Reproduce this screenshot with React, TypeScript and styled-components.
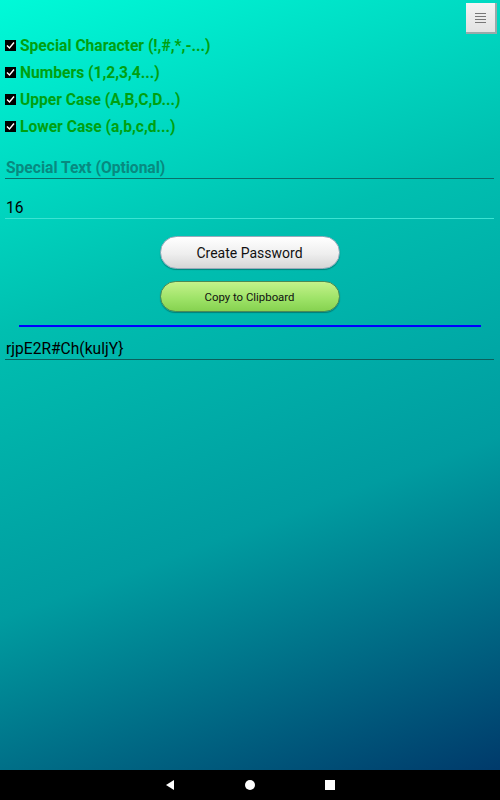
import styled, { createGlobalStyle } from 'styled-components'
import * as React from 'react'

const Global = createGlobalStyle`
  html, body {
    margin: 0;
    padding: 0;
    width: 500px;
    height: 800px;
    overflow: hidden;
  }
  body {
    font-family: Roboto, "Noto Sans", sans-serif;
  }
`;

const Screen = styled.div`
  width: 500px;
  height: 800px;
  display: flex;
  flex-direction: column;
`;

// gradient panel holding the whole form
const Content = styled.div`
  flex: 1;
  position: relative;
  background: linear-gradient(160deg, #00fad8 0%, #00bfb0 35%, #009ca0 65%, #003a6b 100%);
  padding: 32px 6px 0 5px;
  display: flex;
  flex-direction: column;
`;

const MenuButton = styled.div`
  position: absolute;
  top: 3px;
  right: 3px;
  width: 31px;
  height: 31px;
  box-sizing: border-box;
  background: linear-gradient(180deg, #f4f4f4, #e2e2e2);
  border-right: 2px solid #9aa;
  border-bottom: 2px solid #9aa;
  display: flex;
  flex-direction: column;
  justify-content: center;
  align-items: center;
  gap: 2px;
`;

const MenuLine = styled.span`
  width: 11px;
  height: 1px;
  background: #777;
`;

const OptionRow = styled.label`
  display: flex;
  align-items: center;
  height: 27px;
  gap: 4px;
`;

const Box = styled.span`
  width: 11px;
  height: 11px;
  background: #000;
  display: flex;
  align-items: center;
  justify-content: center;
`;

const OptionText = styled.span`
  color: #00a010;
  font-weight: bold;
  font-size: 15.6px;
`;

const Field = styled.div<{line: string; height: number}>`
  height: ${p => p.height}px;
  border-bottom: 1px solid ${p => p.line};
  display: flex;
  align-items: flex-end;
  padding: 0 0 1px 1px;
  box-sizing: border-box;
`;

const Label = styled.span`
  color: #078a80;
  font-weight: bold;
  font-size: 15.6px;
`;

const Value = styled.span`
  color: #000;
  font-size: 15.6px;
`;

const Buttons = styled.div`
  display: flex;
  flex-direction: column;
  align-items: center;
  gap: 12px;
  margin-top: 17px;
`;

const PillButton = styled.div<{green?: boolean}>`
  width: 180px;
  height: ${p => p.green ? 31 : 33}px;
  box-sizing: border-box;
  border-radius: 17px;
  display: flex;
  align-items: center;
  justify-content: center;
  color: #111;
  font-size: ${p => p.green ? 11.4 : 14}px;
  background: ${p => p.green
    ? 'linear-gradient(180deg, #c4f28a 0%, #9ce266 60%, #86d250 100%)'
    : 'linear-gradient(180deg, #ffffff 0%, #eeeeee 55%, #d6d6d6 100%)'};
  border: 1px solid ${p => p.green ? '#4c8a55' : '#9ab'};
  box-shadow: 0 1px 1px rgba(0,0,0,0.3);
`;

const BlueRule = styled.div`
  height: 2px;
  background: #0000ff;
  margin: 13px 13px 0 14px;
`;

const NavBar = styled.div`
  height: 30px;
  background: #000;
  display: flex;
  justify-content: center;
  align-items: center;
  gap: 68px;
`;

const Check = () => (
  <svg width="9" height="9" viewBox="0 0 9 9">
    <path d="M1 4.5 L3.5 7 L8 1.5" stroke="#fff" strokeWidth="1.4" fill="none"/>
  </svg>
);

const options = [
  'Special Character (!,#,*,-...)',
  'Numbers (1,2,3,4...)',
  'Upper Case (A,B,C,D...)',
  'Lower Case (a,b,c,d...)',
];

const password = 'rjpE2R#Ch(kuljY}';

export default function App() {
  return <Screen>
    <Global/>
    <Content>
      <MenuButton>
        <MenuLine/><MenuLine/><MenuLine/><MenuLine/>
      </MenuButton>
      {options.map((o, i) =>
        <OptionRow key={i}><Box><Check/></Box><OptionText>{o}</OptionText></OptionRow>)}
      <Field line="#0b6f6a" height={39}><Label>Special Text (Optional)</Label></Field>
      <Field line="#3ce3d2" height={40}><Value>16</Value></Field>
      <Buttons>
        <PillButton>Create Password</PillButton>
        <PillButton green>Copy to Clipboard</PillButton>
      </Buttons>
      <BlueRule/>
      <Field line="#0b5f5c" height={33}><Value>{password}</Value></Field>
    </Content>
    <NavBar>
      <svg width="12" height="12" viewBox="0 0 12 12"><path d="M10 1 L2 6 L10 11 Z" fill="#fff"/></svg>
      <svg width="12" height="12" viewBox="0 0 12 12"><circle cx="6" cy="6" r="5" fill="#fff"/></svg>
      <svg width="12" height="12" viewBox="0 0 12 12"><rect x="1" y="1" width="10" height="10" fill="#fff"/></svg>
    </NavBar>
  </Screen>
}
